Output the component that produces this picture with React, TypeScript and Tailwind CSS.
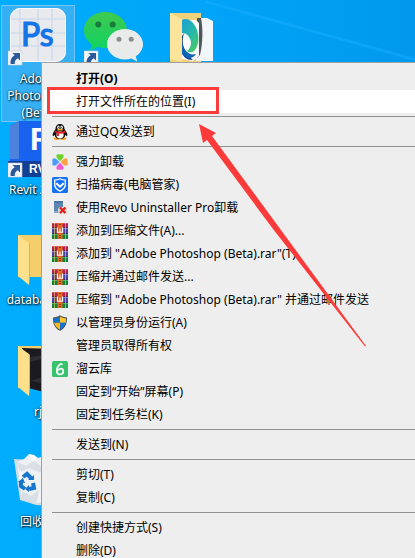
import type { ReactNode } from "react"

interface MenuItem {
  label: string
  icon?: ReactNode
  bold?: boolean
  marked?: boolean
}

function QQIcon() {
  return (
    <svg viewBox="0 0 16 16" className="h-4 w-4">
      <ellipse cx="5" cy="14.6" rx="3.2" ry="1.4" fill="#f59a1b" />
      <ellipse cx="11" cy="14.6" rx="3.2" ry="1.4" fill="#f59a1b" />
      <path d="M8 0C5 0 3.4 2.1 3.5 5L1.2 8.8C.3 10.5.6 12 1.2 12c.5 0 1.1-.8 1.4-1.3C3 13.4 5 15 8 15s5-1.6 5.4-4.3c.3.5.9 1.3 1.4 1.3.6 0 .9-1.5 0-3.2L12.5 5C12.6 2.1 11 0 8 0z" fill="#111" />
      <ellipse cx="8" cy="11" rx="3.6" ry="3.4" fill="#fff" />
      <ellipse cx="6.4" cy="3.2" rx="1.2" ry="1.7" fill="#fff" />
      <ellipse cx="9.6" cy="3.2" rx="1.2" ry="1.7" fill="#fff" />
      <circle cx="6.8" cy="3.4" r=".6" fill="#111" />
      <circle cx="9.2" cy="3.4" r=".6" fill="#111" />
      <ellipse cx="8" cy="5.7" rx="3" ry=".9" fill="#f8a51b" />
      <path d="M3 6.7c3 1.5 7 1.5 10 0l.4 1.800C11 9.600 9 9.900 7 9.600v2.500H4.800V9L2.700 8.300z" fill="#e8232a" />
    </svg>
  )
}

function CloverIcon() {
  return (
    <svg viewBox="0 0 16 16" className="h-4 w-4">
      <path d="M8 7.300C5.500 5.200 4 3.200 4.400 1.500 4.900-.2 7 .2 8 .6c1-.4 3.100-.8 3.600.9C12 3.200 10.500 5.200 8 7.300z" fill="#6bd32c" />
      <path d="M8.700 8c2.100-2.500 4.100-4 5.800-3.600 1.700.5 1.300 2.600.9 3.600.4 1 .8 3.100-.9 3.600C12.800 12 10.800 10.500 8.700 8z" fill="#fba043" />
      <path d="M8 8.700c2.500 2.100 4 4.100 3.600 5.800-.5 1.700-2.600 1.300-3.600.9-1 .4-3.100.8-3.600-.9C4 12.800 5.500 10.800 8 8.700z" fill="#ef59d6" />
      <path d="M7.300 8C5.200 10.500 3.200 12 1.500 11.600-.2 11.100.2 9 .6 8 .2 7-.2 4.900 1.500 4.400 3.200 4 5.200 5.500 7.300 8z" fill="#4b9dff" />
    </svg>
  )
}

function ManagerIcon() {
  return (
    <svg viewBox="0 0 16 16" className="h-4 w-4" fill="none">
      <rect width="16" height="16" rx="1.5" fill="#1672f5" />
      <path d="M8 1.800c2 1.100 3.500 1.400 5.300 1.400v4.300c0 3.100-2.200 5.100-5.300 6.600-3.100-1.500-5.300-3.500-5.300-6.600V3.200C4.500 3.200 6 2.900 8 1.800z" stroke="#fff" strokeWidth="1.3" />
      <path d="M4.300 6.200 8 9.700l3.700-3.500" stroke="#fff" strokeWidth="1.9" />
    </svg>
  )
}

function RevoIcon() {
  return (
    <svg viewBox="0 0 16 16" className="h-4 w-4">
      <path d="M2 1h9v12H2z" fill="#5b86b3" />
      <path d="M2 1h9v2H2z" fill="#4a76a6" />
      <path d="M2 11h7v2H2z" fill="#87a9cb" />
      <rect x="6" y="7" width="9" height="7" rx="3" fill="#d9d9d9" />
      <path d="m8 7.500 5.500 5.500M13.500 7.500 8 13" stroke="#e3211c" strokeWidth="2.3" />
    </svg>
  )
}

function RarIcon() {
  return (
    <svg viewBox="0 0 16 16" className="h-4 w-4">
      <rect y="0" width="16" height="5" fill="#b51f4d" />
      <rect y="0" width="16" height="1" fill="#d84b78" />
      <rect y="5" width="16" height="6" fill="#4c43a5" />
      <rect y="5" width="16" height="1" fill="#8680cf" />
      <rect y="11" width="16" height="5" fill="#138238" />
      <rect y="11" width="16" height="1" fill="#35b65c" />
      <path d="M0 4.500h16M0 10.500h16" stroke="#35203f" strokeWidth=".6" />
      <path d="M2.500 0v16M13.500 0v16" stroke="#d5c76b" strokeWidth=".7" />
      <rect x="5.5" width="5" height="16" fill="#e46b20" />
      <path d="M4.500 4.500h7v6h-7z" fill="#d4571a" />
      <path d="M5.500 4.500v4.800h5V4.500M8 5.500v3.800" fill="none" stroke="#fff" strokeWidth="1.1" />
      <path d="M7 12h2v1H7zM7 14h2v1H7zM7 1h2v1H7z" fill="#8b3c16" />
    </svg>
  )
}

function ShieldIcon() {
  return (
    <svg viewBox="0 0 16 16" className="h-4 w-4">
      <path d="M8 .2C10 1.600 12.300 2.300 15 2.500c.2 6.300-1.600 10.700-7 13.300C2.600 13.200.8 8.800 1 2.500 3.700 2.300 6 1.600 8 .2z" fill="#4a5058" />
      <path d="M8 1.600v6.200H2.200c-.2-1.300-.2-2.700-.2-4.300C4.200 3.300 6.200 2.700 8 1.600z" fill="#1672cf" />
      <path d="M8 1.600c1.800 1.100 3.800 1.700 6 1.900 0 1.600 0 3-.2 4.300H8z" fill="#fdc62e" />
      <path d="M2.200 7.800H8v6.800C4.600 12.900 2.800 10.700 2.200 7.800z" fill="#fdb714" />
      <path d="M8 7.800h5.800c-.6 2.900-2.400 5.100-5.800 6.800z" fill="#1672cf" />
    </svg>
  )
}

function LiuyunIcon() {
  return (
    <svg viewBox="0 0 16 16" className="h-4 w-4" fill="none">
      <rect width="16" height="16" rx="1.5" fill="#35c46d" />
      <path d="M9.500 2.500C6.500 4 4.700 7 4.800 10c.1 2.200 1.300 3.500 3.100 3.500 2 0 3.400-1.400 3.400-3.200 0-1.700-1.100-2.600-2.400-2.600-1.600 0-2.400 1-2.600 2" stroke="#fff" strokeWidth="1.7" />
      <path d="m9.500 2.500.8 1.500" stroke="#fff" strokeWidth="1.3" />
    </svg>
  )
}

const groups: MenuItem[][] = [
  [
    { label: "打开(O)", bold: true },
    { label: "打开文件所在的位置(I)", marked: true },
  ],
  [{ label: "通过QQ发送到", icon: <QQIcon /> }],
  [
    { label: "强力卸载", icon: <CloverIcon /> },
    { label: "扫描病毒(电脑管家)", icon: <ManagerIcon /> },
    { label: "使用Revo Uninstaller Pro卸载", icon: <RevoIcon /> },
    { label: "添加到压缩文件(A)...", icon: <RarIcon /> },
    { label: '添加到 "Adobe Photoshop (Beta).rar"(T)', icon: <RarIcon /> },
    { label: "压缩并通过邮件发送...", icon: <RarIcon /> },
    { label: '压缩到 "Adobe Photoshop (Beta).rar" 并通过邮件发送', icon: <RarIcon /> },
    { label: "以管理员身份运行(A)", icon: <ShieldIcon /> },
    { label: "管理员取得所有权" },
    { label: "溜云库", icon: <LiuyunIcon /> },
    { label: "固定到“开始”屏幕(P)" },
    { label: "固定到任务栏(K)" },
  ],
  [{ label: "发送到(N)" }],
  [{ label: "剪切(T)" }, { label: "复制(C)" }],
  [{ label: "创建快捷方式(S)" }, { label: "删除(D)" }],
]

function MenuRow({ label, icon, bold, marked }: MenuItem) {
  return (
    <li role="none" className={marked ? "relative bg-white" : ""}>
      <button
        type="button"
        role="menuitem"
        className={`flex h-[23px] w-full items-center gap-2 pl-2 text-left whitespace-nowrap ${bold ? "font-bold" : ""}`}
      >
        <span className="h-4 w-4 shrink-0">{icon}</span>
        <span>{label}</span>
      </button>
      {marked && (
        <span className="pointer-events-none absolute -top-[3px] left-[3px] h-[27px] w-[172px] border-3 border-[#fc3a3a]" />
      )}
    </li>
  )
}

function ContextMenu() {
  return (
    <div
      role="menu"
      className="absolute top-[62px] right-0 left-[41px] border-t border-l border-[#a0a0a0] bg-[#eee] py-1 pl-[2px] text-[12px] text-black"
    >
      {groups.map((items, i) => (
        <div key={i}>
          {i > 0 && <hr className="my-[3px] ml-2 border-t border-[#919191]" />}
          <ul role="none">
            {items.map((item) => (
              <MenuRow key={item.label} {...item} />
            ))}
          </ul>
        </div>
      ))}
    </div>
  )
}

function ShortcutArrow({ x, y }: { x: number; y: number }) {
  return (
    <g transform={`translate(${x} ${y})`}>
      <rect width="14" height="14" fill="#f4f5f7" stroke="#c5ccd5" strokeWidth=".6" />
      <path d="M4.500 2H12v7.500L9.800 7.300C7.600 8.500 6.600 10 6.800 13H2.600C2 9 3.500 6 6.700 4.200z" fill="#2a5a9c" />
    </g>
  )
}

function PhotoshopIcon() {
  return (
    <svg viewBox="0 0 60 58" className="h-[58px] w-[60px]">
      <rect x="2" y="0" width="56" height="54" rx="10" fill="#e9eaee" />
      <path d="M12 0v54M30 0v54M44 0v54M2 11h56M2 25h56M2 38h56" stroke="#c6d4ec" strokeWidth="1" />
      <rect x="2.5" y=".5" width="55" height="53" rx="10" fill="none" stroke="#f7f8fa" />
      <text x="13" y="38" fontSize="32" fill="#1473e6" stroke="#1473e6" strokeWidth="1.2" fontFamily="Lato, sans-serif">Ps</text>
      <ShortcutArrow x={0} y={43} />
    </svg>
  )
}

function WeChatIcon() {
  return (
    <svg viewBox="0 0 60 58" className="h-[58px] w-[60px]">
      <defs>
        <linearGradient id="wechat" x1="0" y1="0" x2="0" y2="1">
          <stop offset="0" stopColor="#3fc94f" />
          <stop offset="1" stopColor="#0fd364" />
        </linearGradient>
      </defs>
      <path d="M21.500 4C9.600 4 0 12 0 22.500c0 6 3 10.700 7.800 14L6 43l8-4.300c2.300.8 5 1.300 7.500 1.300C33.400 40 43 32.500 43 22.500S33.400 4 21.500 4z" fill="url(#wechat)" />
      <circle cx="14.3" cy="16.5" r="3" fill="#187c39" />
      <circle cx="28.7" cy="16.5" r="3" fill="#187c39" />
      <path d="M41 21c-9.900 0-18 6.700-18 15.200s8.100 15.200 18 15.200c2.300 0 4.400-.3 6.300-1l6 3.200-1.600-5.400c4.400-2.700 7.300-7 7.300-12C59 27.700 50.900 21 41 21z" fill="#e9eaea" />
      <circle cx="35" cy="31.3" r="2.5" fill="#8b8e90" />
      <circle cx="47.2" cy="31.3" r="2.5" fill="#8b8e90" />
      <ShortcutArrow x={0} y={43} />
    </svg>
  )
}

function BrowserFolderIcon() {
  return (
    <svg viewBox="0 0 46 52" className="h-[52px] w-[46px]">
      <defs>
        <linearGradient id="edge" x1="0" y1="0" x2=".7" y2="1">
          <stop offset="0" stopColor="#1d9fd6" />
          <stop offset=".6" stopColor="#27b9a4" />
          <stop offset="1" stopColor="#4cc76a" />
        </linearGradient>
      </defs>
      <path d="M0 1h31v49H0z" fill="#f1d27c" />
      <path d="M27 6h10l6 3v40H26z" fill="#f3f6f8" />
      <path d="M27 6h4c2 10 2 24-1 37l-3 3z" fill="#4d555d" />
      <path d="M12 8h14l3 3v33l-6 5-11-2z" fill="#f8fafb" />
      <path d="M12 8c6-3 12 2 15 10 2.500 8 2 16-3 21-1.500 1.500-5 2-7 0 5-4 5-10 2-14-1.500-2.500-4-4-7-4z" fill="url(#edge)" />
      <path d="M14 21c-3 10-1 19 9 27-7 0-11-3-11-12V24z" fill="#123f86" />
      <path d="M12 30c2 9 7 14 14 12-3 5-10 6-14 0z" fill="#0e64b4" />
      <path d="m0 1 12 6v40l-1 3-11-3z" fill="#fce49a" />
    </svg>
  )
}

function FolderIcon({ dark }: { dark?: boolean }) {
  return (
    <svg viewBox="0 0 40 52" className="h-[52px] w-[40px]">
      <path d="M0 1h38v42H0z" fill="#f3ce6b" />
      {dark && <path d="m4 3 34 1v46l-28-7z" fill="#1b1b1f" />}
      {dark && <path d="m12 12 26-4v2L12 17zM12 36l16-5v8z" fill="#2c2c31" />}
      <path d="m0 1 11 8v42L0 42z" fill="#fde08c" />
      <path d="M11 9v42l1-7V10z" fill="#d9b357" />
    </svg>
  )
}

function RevitIcon() {
  return (
    <svg viewBox="0 0 60 58" className="h-[58px] w-[60px]">
      <path d="m2 5 9-5h49v41H2z" fill="#1763f0" />
      <path d="m2 5 9-5v38H2z" fill="#4c82dc" />
      <text x="22" y="29" fontSize="31" fontWeight="700" fill="#fff" fontFamily="'Liberation Sans', sans-serif">R</text>
      <path d="M0 40h60v16H0z" fill="#133f94" />
      <text x="21" y="52" fontSize="12" fontWeight="700" fill="#fff" fontFamily="'Liberation Sans', sans-serif">RVT</text>
      <ShortcutArrow x={0} y={42} />
    </svg>
  )
}

function RecycleIcon() {
  return (
    <svg viewBox="0 0 48 54" className="h-[54px] w-[48px]">
      <path d="m0 5 46 3-6 44-18-1L6 46z" fill="#d5dde3" />
      <path d="m3 8 7-3 5-5 5 2 4 2 6-2 12 6-5 40-14 1-15-4z" fill="#edf1f4" />
      <path d="m3 8 9 4 8-5 8 6 12-5-12 11-13-5-9 4zM8 37l9 5 8-6-3 14-14-5z" fill="#d9dfe4" />
      <path d="m15 0 4 7 5-3-4-3zM6 16l6 8-5 9z" fill="#fff" />
      <g fill="none" stroke="#1675cd" strokeWidth="4">
        <path d="m9 23 4-3 4 4" />
        <path d="m7 27 0 5 4 3" />
        <path d="m15 35 5-1-1-5" />
      </g>
      <path d="m14 26 6 0 0-5zM4 28l5-4 2 5zM15 31v7l-4-3z" fill="#1675cd" />
    </svg>
  )
}

const labelClass =
  "text-center text-[12px] leading-[17px] text-white [text-shadow:1px_1px_2px_#000,0_0_2px_#003050]"

export default function App() {
  return (
    <main className="relative h-screen overflow-hidden bg-linear-to-r from-[#00adfc] via-[#00a4f8] to-[#0099ed] font-['Noto_Sans','Noto_Sans_CJK_SC',sans-serif]">
      <svg viewBox="0 0 210 62" className="absolute top-0 right-0 h-[62px] w-[210px]">
        <path d="M0 0 210 58v3L0 3z" fill="#18aeff" opacity=".5" />
      </svg>

      <a href="#photoshop" className="absolute top-[5px] left-[1px] flex h-[117px] w-[74px] flex-col items-center gap-1 border border-[#73c7f8] bg-[#36b0f4] pt-[2px]">
        <PhotoshopIcon />
        <span className={labelClass}>
          Adobe
          <br />
          Photoshop
          <br />
          (Beta)
        </span>
      </a>
      <a href="#wechat" aria-label="微信" className="absolute top-2 left-[84px]">
        <WeChatIcon />
      </a>
      <a href="#browser" aria-label="Edge" className="absolute top-3 left-[170px]">
        <BrowserFolderIcon />
      </a>
      <a href="#revit" className="absolute top-[121px] left-[1px] flex w-[74px] flex-col items-center gap-[2px]">
        <RevitIcon />
        <span className={labelClass}>Revit 2021</span>
      </a>
      <a href="#database" className="absolute top-[234px] left-[1px] flex w-[74px] flex-col items-center gap-[5px]">
        <FolderIcon />
        <span className={labelClass}>database-1</span>
      </a>
      <a href="#rj" className="absolute top-[345px] left-[1px] flex w-[74px] flex-col items-center gap-[6px]">
        <FolderIcon dark />
        <span className={labelClass}>rj</span>
      </a>
      <a href="#recycle" className="absolute top-[454px] left-[1px] flex w-[74px] flex-col items-center gap-[5px]">
        <RecycleIcon />
        <span className={labelClass}>回收站</span>
      </a>

      <ContextMenu />

      <svg viewBox="0 0 168 223" className="pointer-events-none absolute top-[124px] left-[199px] h-[223px] w-[168px]">
        <path d="m0 0 17 9-4 3 154 210-1 .5L74 105 8 16l-4 3z" fill="#fc3a3a" />
      </svg>
    </main>
  )
}
